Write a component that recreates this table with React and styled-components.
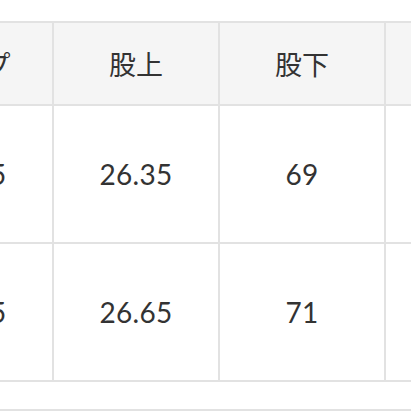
import React from 'react';
import styled, { createGlobalStyle } from 'styled-components';

const GlobalStyle = createGlobalStyle`
	html, body {
		margin: 0;
		padding: 0;
		background: #ffffff;
	}
	body {
		font-family: Lato, "Noto Sans CJK JP", sans-serif;
		color: #333333;
	}
`;

const Page = styled.div`
	width: 411px;
	height: 411px;
	overflow: hidden;
	padding-top: 21px;
	box-sizing: border-box;
`;

const Grid = styled.div`
	display: grid;
	grid-template-columns: repeat(4, 164px);
	grid-template-rows: 81px 136px 136px;
	gap: 2px;
	width: max-content;
	margin-left: -114px;
	border: 2px solid #e2e2e2;
	background: #e2e2e2;
`;

const Cell = styled.div`
	display: flex;
	align-items: center;
	justify-content: center;
	background: ${props => (props.head ? '#f5f5f5' : '#ffffff')};
	font-family: ${props => (props.head ? '"Noto Sans CJK JP", sans-serif' : 'Lato, "Noto Sans CJK JP", sans-serif')};
	font-size: ${props => (props.head ? '27px' : '28px')};
	font-weight: 400;
	color: #333333;
	letter-spacing: ${props => (props.head ? '0' : '0.3px')};
`;

const Divider = styled.div`
	height: 2px;
	margin-top: 27px;
	background: #e2e2e2;
`;

const headers = ['ヒップ', '股上', '股下', '裾幅'];
const rows = [
	['100.5', '26.35', '69', '18'],
	['104.5', '26.65', '71', '18.5'],
];

export default function App() {
	return (
		<>
			<GlobalStyle />
			<Page>
				<Grid>
					{headers.map(h => (
						<Cell head key={h}>{h}</Cell>
					))}
					{rows.map((row, i) =>
						row.map((v, j) => <Cell key={i + '-' + j}>{v}</Cell>)
					)}
				</Grid>
				<Divider />
			</Page>
		</>
	);
}
